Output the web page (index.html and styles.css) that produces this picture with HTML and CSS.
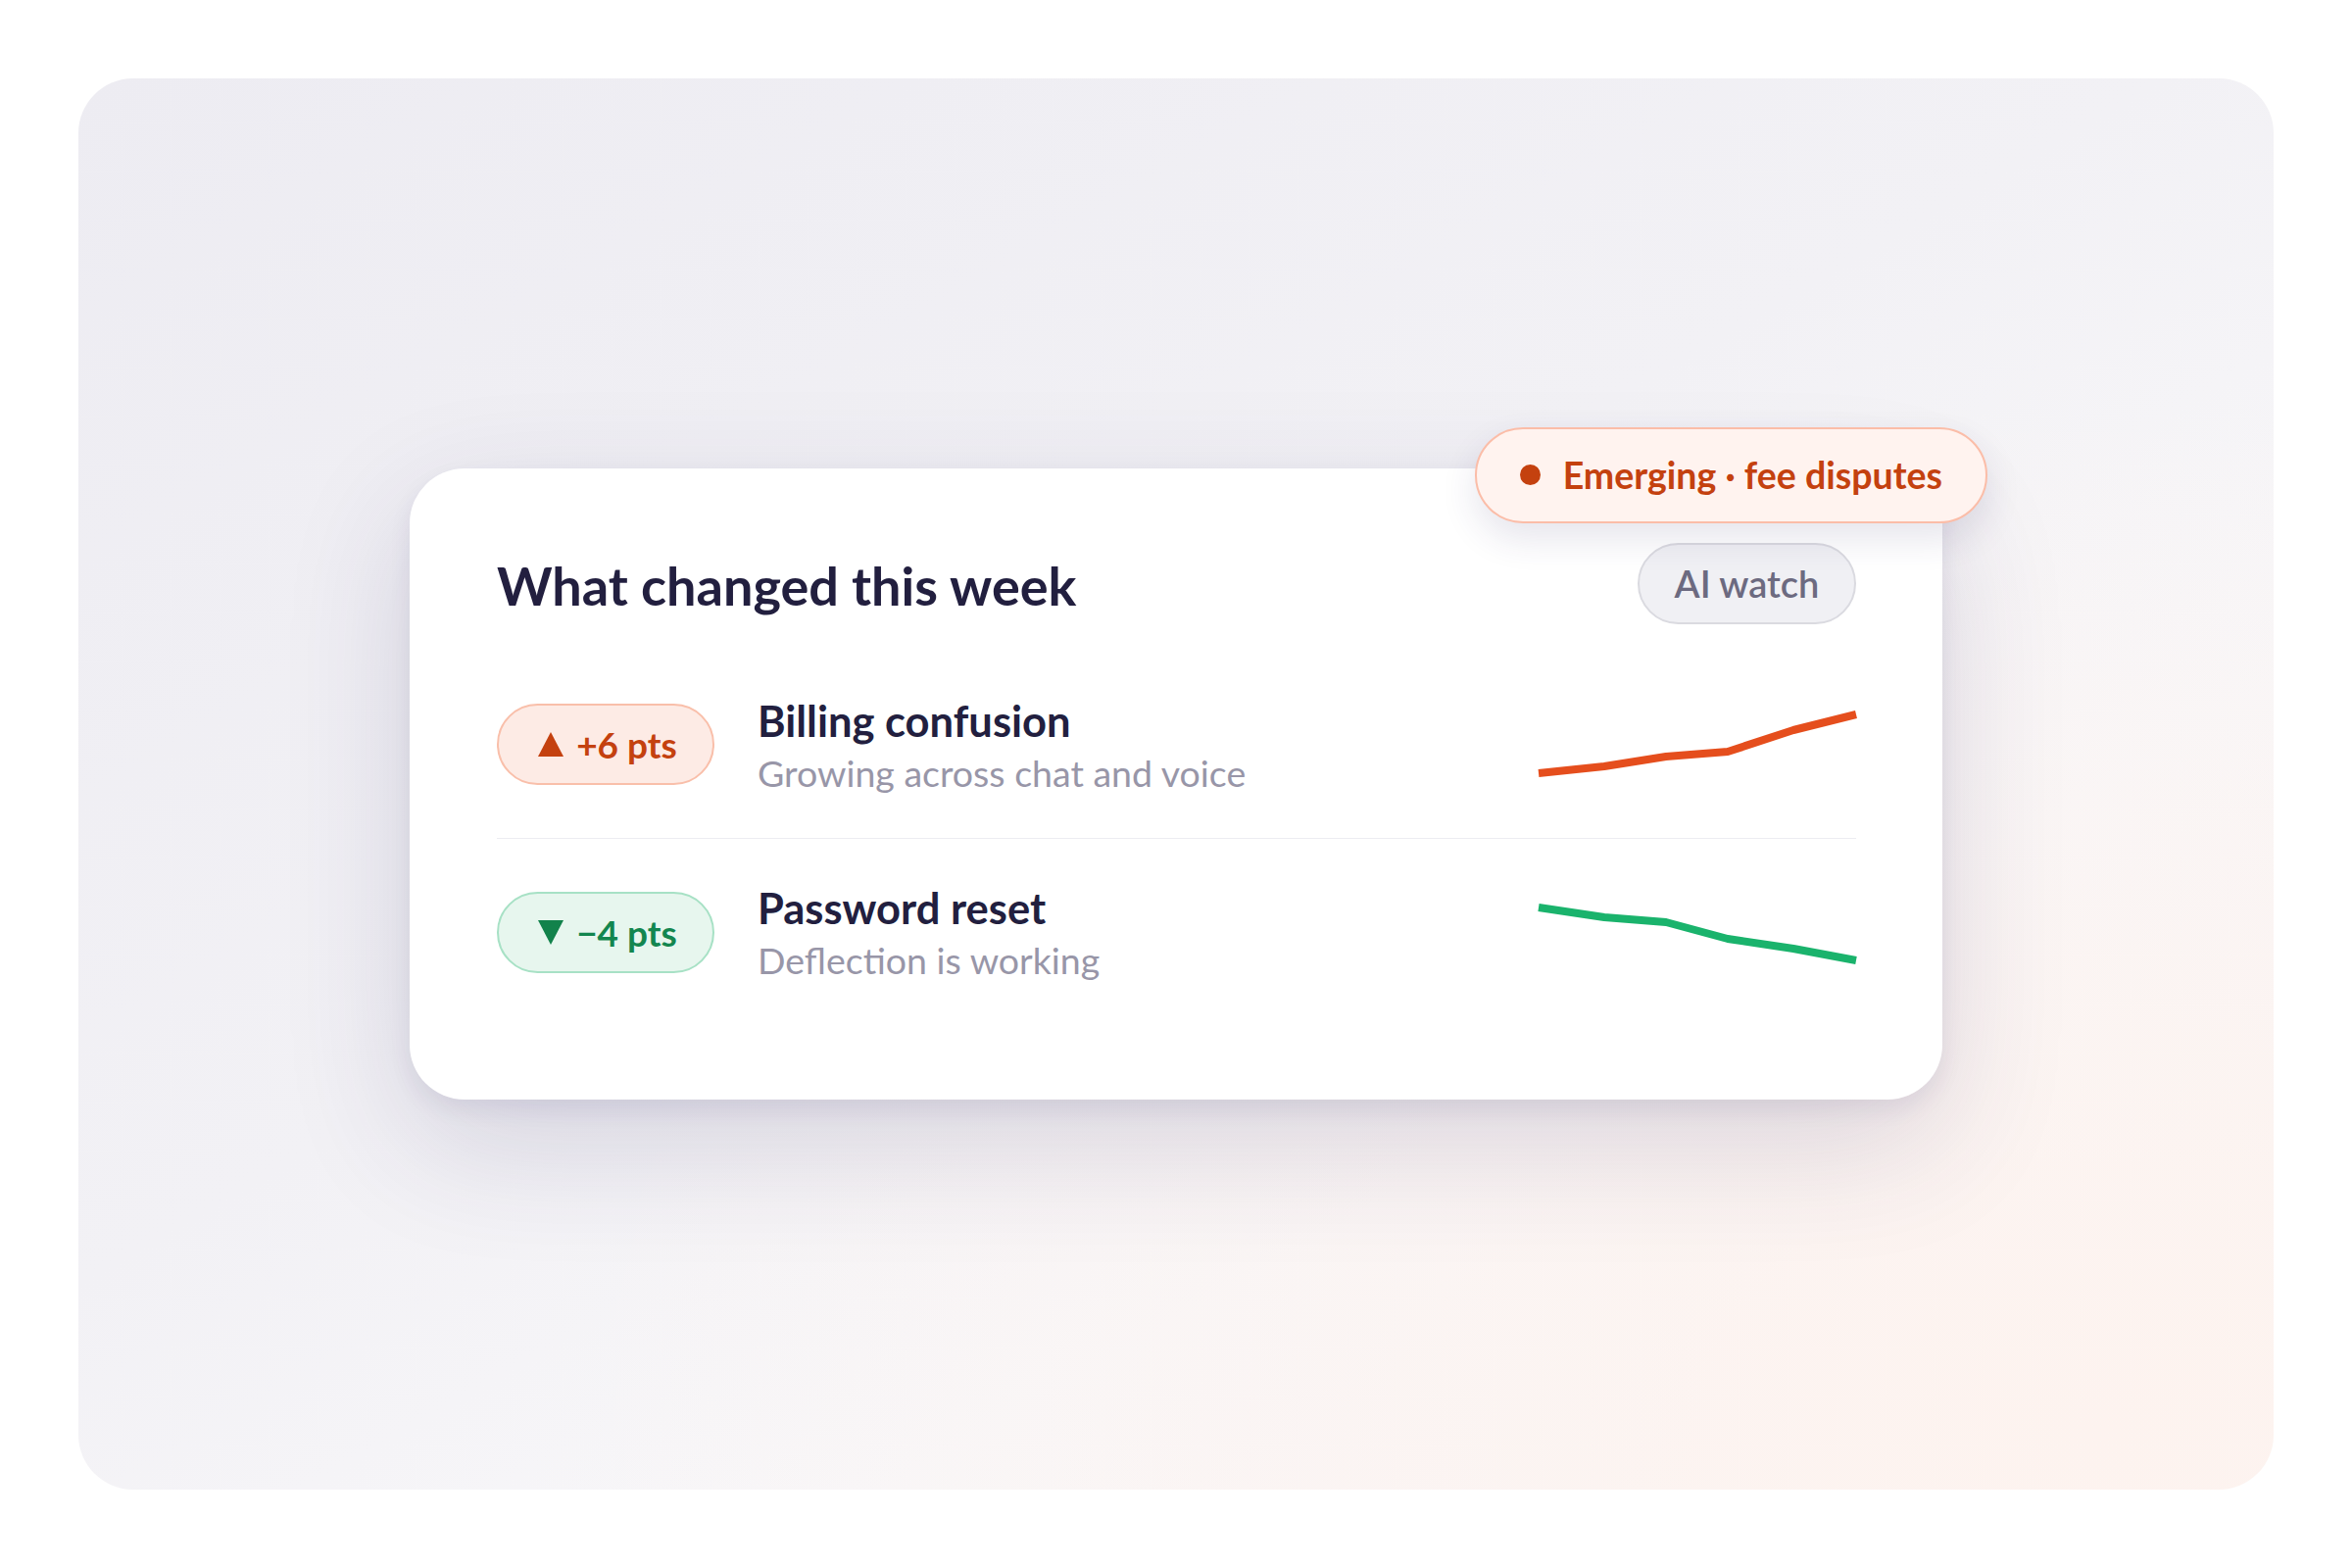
FILE: index.html
```html
<!DOCTYPE html>
<html lang="en">
<head>
  <meta charset="UTF-8">
  <meta name="viewport" content="width=device-width, initial-scale=1.0">
  <title>Weekly changes</title>
  <link rel="stylesheet" href="styles.css">
</head>
<body>

<div class="stage">
  <section class="card">
    <div class="flag"><span class="flag-dot"></span>Emerging · fee disputes</div>

    <header class="card-head">
      <h2>What changed this week</h2>
      <span class="tag">AI watch</span>
    </header>

    <ul class="changes">
      <li class="change">
        <span class="delta up">
          <svg width="26" height="25" viewBox="0 0 26 25"><polygon points="13,0 26,25 0,25"/></svg>
          +6 pts
        </span>
        <div class="change-text">
          <h3>Billing confusion</h3>
          <p>Growing across chat and voice</p>
        </div>
        <svg class="spark" width="324" height="80" viewBox="0 0 324 80">
          <polyline class="line-up" points="0,69 67,62 130,52 193,47 260,25 324,9"/>
        </svg>
      </li>
      <li class="change">
        <span class="delta down">
          <svg width="26" height="25" viewBox="0 0 26 25"><polygon points="0,0 26,0 13,25"/></svg>
          −4 pts
        </span>
        <div class="change-text">
          <h3>Password reset</h3>
          <p>Deflection is working</p>
        </div>
        <svg class="spark" width="324" height="80" viewBox="0 0 324 80">
          <polyline class="line-down" points="0,15 67,25 130,30 193,47 260,57 324,69"/>
        </svg>
      </li>
    </ul>
  </section>
</div>

</body>
</html>
```

FILE: styles.css
```css
body {
  margin: 0;
  background: #ffffff;
  font-family: Lato, "Noto Sans", sans-serif;
  color: #221f3f;
}
.stage {
  margin: 80px;
  height: 1440px;
  border-radius: 56px;
  background:
    radial-gradient(ellipse at 92% 96%, #fdf3ef 0%, rgba(253, 243, 239, 0) 55%),
    linear-gradient(150deg, #edecf2 0%, #f2f1f5 45%, #f8f7f9 70%, #fbf5f3 100%);
  display: flex;
  align-items: center;
  justify-content: center;
}
.card {
  position: relative;
  width: 1564px;
  box-sizing: border-box;
  padding: 76px 88px 76px 89px;
  background: #ffffff;
  border-radius: 56px;
  box-shadow:
    0 10px 22px rgba(50, 44, 100, 0.08),
    0 44px 130px rgba(50, 44, 100, 0.16);
}

/* floating alert pill over the top-right corner */
.flag {
  position: absolute;
  top: -42px;
  right: -46px;
  height: 98px;
  box-sizing: border-box;
  padding: 0 44px;
  display: flex;
  align-items: center;
  gap: 23px;
  background: #fff3ef;
  border: 2px solid #fbbda8;
  border-radius: 49px;
  color: #c4410f;
  font-size: 37.5px;
  font-weight: 700;
  box-shadow: 0 16px 36px rgba(50, 44, 100, 0.12);
  z-index: 2;
}
.flag-dot {
  width: 21px;
  height: 21px;
  border-radius: 50%;
  background: #c4410f;
}

.card-head {
  height: 83px;
  display: flex;
  align-items: center;
  justify-content: space-between;
}
.card-head h2 {
  margin: 6px 0 0;
  font-size: 54px;
  font-weight: 700;
  line-height: 1.2;
  color: #221f3f;
}
.tag {
  height: 83px;
  width: 223px;
  box-sizing: border-box;
  display: flex;
  align-items: center;
  justify-content: center;
  background: #f0f0f4;
  border: 2px solid #dadae0;
  border-radius: 42px;
  color: #6c6a80;
  font-size: 38px;
  font-weight: 600;
}

.changes {
  list-style: none;
  margin: 28px 0 0;
  padding: 0;
}
.change {
  display: flex;
  align-items: center;
  padding: 44px 0;
}
.change + .change {
  border-top: 1px solid #ececf1;
}

.delta {
  width: 222px;
  height: 83px;
  box-sizing: border-box;
  display: flex;
  align-items: center;
  justify-content: center;
  gap: 13px;
  padding-left: 4px;
  border-radius: 42px;
  border: 2px solid;
  font-size: 37px;
  font-weight: 700;
  flex-shrink: 0;
}
.delta.up {
  background: #fdebe5;
  border-color: #f9bfaa;
  color: #c4410f;
}
.delta.up svg {
  fill: #c4410f;
}
.delta.down {
  background: #e7f6ee;
  border-color: #a7e1c5;
  color: #13864f;
}
.delta.down svg {
  fill: #12824b;
}

.change-text {
  flex: 1;
  margin-left: 44px;
}
.change-text h3 {
  margin: 0;
  font-size: 43.5px;
  font-weight: 700;
  line-height: 1.2;
  color: #221f3f;
}
.change-text p {
  margin: 5px 0 0;
  font-size: 37.5px;
  line-height: 1.2;
  color: #9896a8;
}

.spark {
  flex-shrink: 0;
  overflow: visible;
}
.spark polyline {
  fill: none;
  stroke-width: 8;
  stroke-linejoin: round;
}
.line-up {
  stroke: #e54e1d;
}
.line-down {
  stroke: #1ab36c;
}
```
